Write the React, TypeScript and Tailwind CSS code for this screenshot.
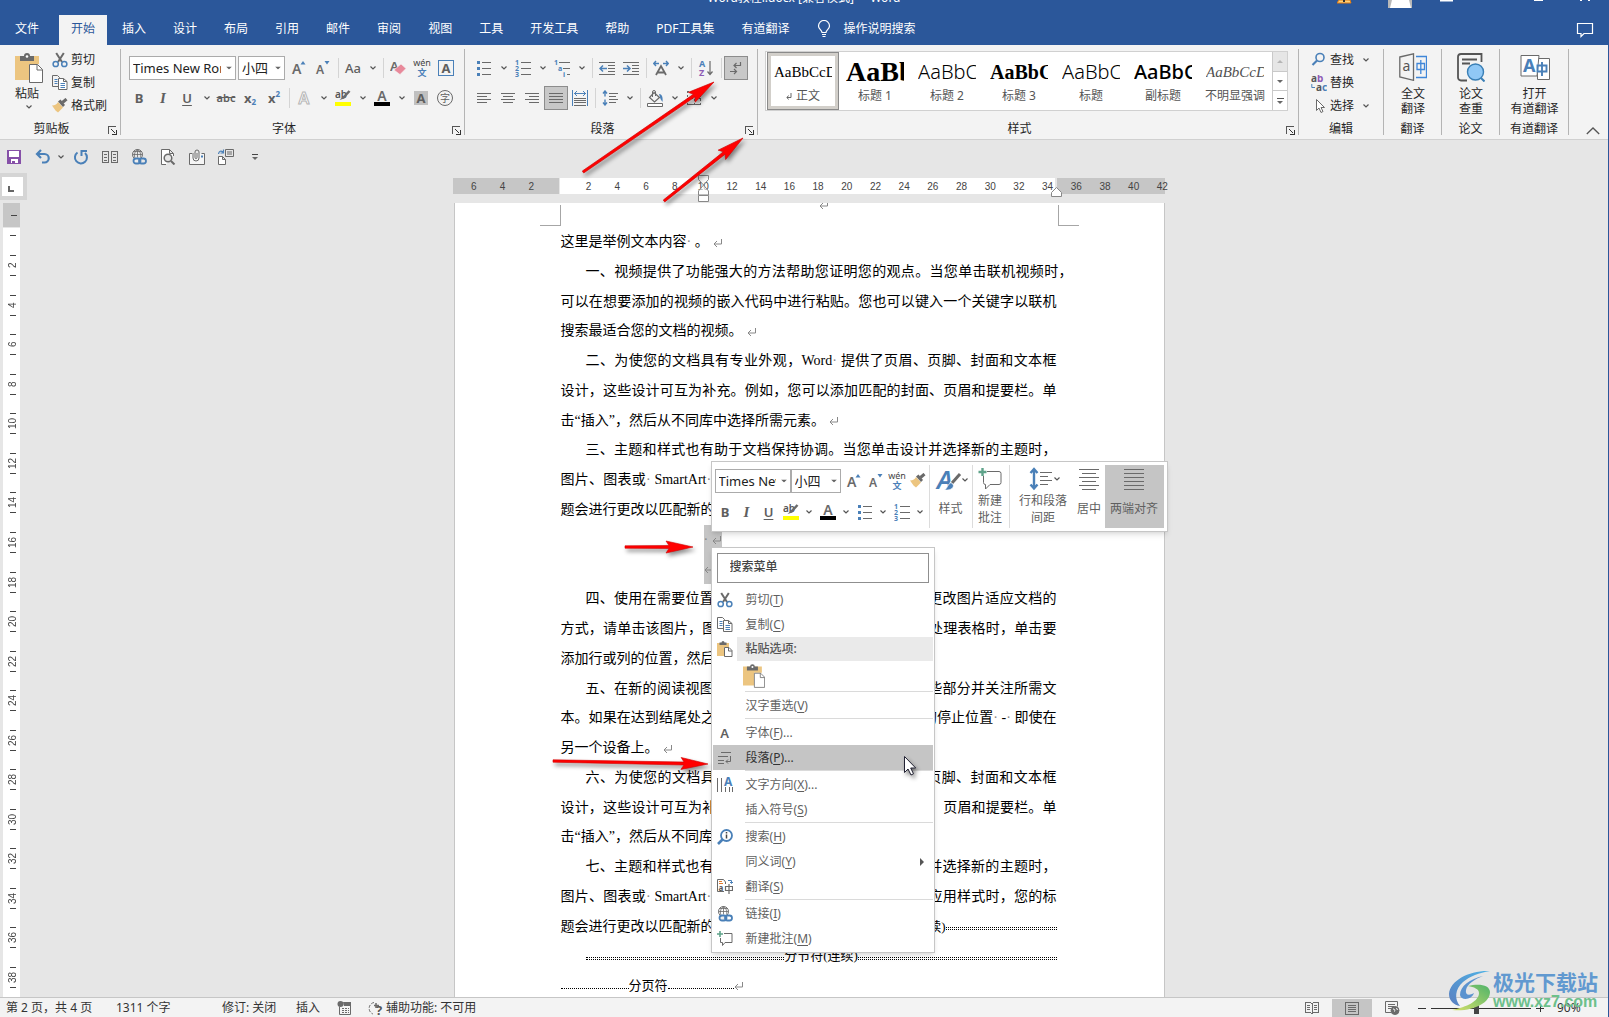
import * as React from "react";
import clsx from "clsx";

const GRAY = "#6a6a6a";
const BLUE = "#4a80b8";
const SAND = "#ecc580";

type IconProps = { w?: number; h?: number; crisp?: boolean; className?: string; children: React.ReactNode };

function Icon({ w = 16, h = 16, crisp, className, children }: IconProps) {
  return (
    <svg
      width={w}
      height={h}
      viewBox={`0 0 ${w} ${h}`}
      fill="none"
      stroke={GRAY}
      shapeRendering={crisp ? "crispEdges" : undefined}
      className={clsx("shrink-0", className)}
      aria-hidden="true"
    >
      {children}
    </svg>
  );
}

/* ---------- shared icons ---------- */

const Chevron = () => (
  <Icon w={6} h={4}>
    <path d="M.5 .5 3 3 5.5 .5" stroke="#555" strokeWidth="1.2" />
  </Icon>
);

const Caret = ({ className }: { className?: string }) => (
  <Icon w={6} h={3} className={className}>
    <path d="M0 0h6L3 3z" fill="#666" stroke="none" />
  </Icon>
);

const Scissors = () => (
  <Icon>
    <path d="M4.2 1 10 10M11.8 1 6 10" stroke="#6a6a6a" strokeWidth="2" />
    <circle cx="3.7" cy="12" r="2.6" stroke={BLUE} strokeWidth="1.5" />
    <circle cx="12.3" cy="12" r="2.6" stroke={BLUE} strokeWidth="1.5" />
  </Icon>
);

const Copy = () => (
  <Icon>
    <path d="M6 11.5H.5V.5h5l2 2V4" />
    <path d="M2.5 4.5h3M2.5 6.5h3M2.5 8.5h3" stroke={BLUE} />
    <path d="M6.5 3.5h5l3.5 3V14.5H6.5z" fill="#fff" />
    <path d="M11.5 3.5v3H15" />
    <path d="M8.500 8.500h4.500M8.500 10.500h4.500M8.500 12.500h4.500" stroke={BLUE} />
  </Icon>
);

const Brush = () => (
  <Icon>
    <path d="M6 4 11 9.500 6 14.500 3.500 12.500 0 7.500C3 7.500 5 6 6 4z" fill={SAND} stroke="none" />
    <path d="M6 3.500 8.500 1.500 13 7 11 9z" fill={GRAY} stroke="none" />
    <path d="M10.500 4.500 14.500 1" strokeWidth="3" />
  </Icon>
);

const PasteSmall = () => (
  <Icon>
    <path d="M0 2h12v4H7v9H0z" fill={SAND} stroke="none" />
    <path d="M2.500 1.500h2a1.500 1.500 0 0 1 3 0h2v2.500h-7z" fill={GRAY} stroke="none" />
    <path d="M7.500 6.500h4.500l3 3v6H7.500z" fill="#fff" />
    <path d="M11.500 6.500v3.500h3.500" />
  </Icon>
);

const PasteLarge = ({ w = 28, h = 30 }: { w?: number; h?: number }) => (
  <svg width={w} height={h} viewBox="0 0 28 30" fill="none" className="shrink-0" aria-hidden="true">
    <path d="M0 3h24v8H14v16H0z" fill={SAND} />
    <path d="M5 3h4a3 3 0 0 1 6 0h4v5H5z" fill={GRAY} />
    <circle cx="12" cy="3.500" r="1.300" fill="#fff" />
    <path d="M14.500 11.500h8l5 5v13h-13z" fill="#fff" stroke={GRAY} />
    <path d="M22 11.500v5.500h5.500" stroke={GRAY} />
  </svg>
);

const GrowFont = () => (
  <Icon>
    <text x="1" y="14" fontSize="14" fontWeight="600" fill={GRAY} stroke="none" fontFamily="Noto Sans">A</text>
    <path d="M9.500 4.500 12 1l2.500 3.500z" fill={BLUE} stroke="none" />
  </Icon>
);

const ShrinkFont = () => (
  <Icon>
    <text x="1" y="14" fontSize="12" fontWeight="600" fill={GRAY} stroke="none" fontFamily="Noto Sans">A</text>
    <path d="M9.500 1 12 4.500 14.500 1z" fill={BLUE} stroke="none" />
  </Icon>
);

const Pinyin = () => (
  <Icon w={18} h={18}>
    <text x="9" y="7" fontSize="9" textAnchor="middle" fill="#444" stroke="none" fontFamily="Noto Sans">wén</text>
    <text x="9" y="17" fontSize="9" fontWeight="700" textAnchor="middle" fill={BLUE} stroke="none" fontFamily="Noto Sans CJK SC">文</text>
  </Icon>
);

const Highlight = () => (
  <Icon w={16} h={18}>
    <text x="0" y="9" fontSize="10" fontWeight="600" fill="#555" stroke="none" fontFamily="Noto Sans">ab</text>
    <path d="M14.500 2 8 9" strokeWidth="2.500" />
    <path d="M8 7.500 9.500 9.500 4.500 11z" fill={GRAY} stroke="none" />
    <path d="M0 13h16v4H0z" fill="#ff0" stroke="none" />
  </Icon>
);

const FontColor = () => (
  <Icon w={16} h={18}>
    <text x="8" y="12" fontSize="14" fontWeight="600" textAnchor="middle" fill={GRAY} stroke="none" fontFamily="Noto Sans">A</text>
    <path d="M0 13h16v4H0z" fill="#000" stroke="none" />
  </Icon>
);

const Bullets = () => (
  <Icon crisp>
    <path d="M1 1h3v3H1zM1 7h3v3H1zM1 13h3v3H1z" fill={BLUE} stroke="none" />
    <path d="M6 2.500h9M6 8.500h9M6 14.500h9" />
  </Icon>
);

const Numbering = () => (
  <Icon h={18}>
    <g fontSize="7" fontWeight="700" fill={BLUE} stroke="none" fontFamily="Noto Sans">
      <text x="0" y="6">1</text>
      <text x="0" y="12">2</text>
      <text x="0" y="18">3</text>
    </g>
    <path d="M6 3.500h10M6 9.500h10M6 15.500h10" shapeRendering="crispEdges" />
  </Icon>
);

const Lines = ({ rows }: { rows: [number, number][] }) => (
  <Icon w={14} h={13} crisp>
    {rows.map(([x1, x2], i) => (
      <path key={i} d={`M${x1} ${i * 3 + 1.5}H${x2}`} />
    ))}
  </Icon>
);

const Return = ({ className = "ml-1" }: { className?: string }) => (
  <Icon w={9} h={8} className={clsx("inline-block", className)}>
    <path d="M8.500 0v5H1M4 2 1 5l3 3" stroke="#888" />
  </Icon>
);

const GlobeLink = () => (
  <Icon>
    <circle cx="6.500" cy="5.500" r="5" />
    <path d="M1.500 5.500h10M6.500 .5v8M6.500 .5C3 3 3 7 4 9M6.500 .5c3 2 3.500 5 3 8M2.500 2.500h8" strokeWidth=".8" />
    <rect x="2.500" y="9.500" width="7" height="5" rx="2.500" stroke={BLUE} strokeWidth="1.800" fill="#eee" />
    <rect x="8" y="9.500" width="7" height="5" rx="2.500" stroke={BLUE} strokeWidth="1.800" />
  </Icon>
);

const NewComment = () => (
  <Icon>
    <path d="M7 2.500h8v9H8L5.500 14.500v-3H3.500V7" />
    <path d="M3 0v6M0 3h6" stroke="#5fa38a" strokeWidth="1.600" />
  </Icon>
);

/* ---------- ribbon pieces ---------- */

function Tool({ label, active, className, children }: { label: string; active?: boolean; className?: string; children: React.ReactNode }) {
  return (
    <button
      type="button"
      aria-label={label}
      aria-pressed={active}
      className={clsx(
        "flex h-6 shrink-0 items-center justify-center text-[#5f5f5f]",
        active && "border border-[#8c8c8c] bg-[#c8c8c8]",
        className ?? "w-6"
      )}
    >
      {children}
    </button>
  );
}

const Drop = ({ label }: { label: string }) => (
  <button type="button" aria-label={label} className="flex h-6 w-[15px] shrink-0 items-center justify-center">
    <Chevron />
  </button>
);

const Sep = () => (
  <span className="flex h-5 w-[6px] shrink-0 justify-center">
    <span className="w-px bg-[#d4d4d4]" />
  </span>
);

function Combo({ label, value, className }: { label: string; value: string; className: string }) {
  return (
    <span className={clsx("relative shrink-0", className)}>
      <select
        aria-label={label}
        defaultValue={value}
        className="h-full w-full appearance-none overflow-hidden border border-[#ababab] bg-white pr-[14px] pl-[3px] text-[13px] leading-[20px] text-[#222]"
      >
        <option>{value}</option>
      </select>
      <Caret className="pointer-events-none absolute top-1/2 right-1 -translate-y-1/2" />
    </span>
  );
}

function Group({ label, launcher, className, children }: { label: string; launcher?: boolean; className: string; children: React.ReactNode }) {
  return (
    <section aria-label={label} className={clsx("flex", className)}>
      <div className="flex min-w-0 flex-1 flex-col">
        <div className="h-[74px]">{children}</div>
        <div className="flex h-5 items-center">
          <span className="flex-1 text-center whitespace-nowrap">{label}</span>
          {launcher && (
            <button type="button" aria-label={`${label} 设置`} className="mt-[2px] mr-[2px] ml-[5px] w-[10px]">
              <Icon w={9} h={9} crisp>
                <path d="M.5 8V.5H8" stroke="#555" />
                <path d="M3 3l4 4M8 4v4H4" stroke="#333" />
              </Icon>
            </button>
          )}
        </div>
      </div>
      <div className="my-1 w-px bg-[#b4b4b4]" />
    </section>
  );
}

const SmallCmd = ({ icon, text, drop }: { icon: React.ReactNode; text: string; drop?: boolean }) => (
  <button type="button" className="flex h-[23px] items-center gap-[3px] whitespace-nowrap">
    {icon}
    <span>{text}</span>
    {drop && (
      <span className="ml-[6px]">
        <Chevron />
      </span>
    )}
  </button>
);

const BigCmd = ({ icon, lines }: { icon: React.ReactNode; lines: string[] }) => (
  <button type="button" className="flex w-full flex-col items-center pt-2 pl-px leading-[15px]">
    <span className="mb-[5px] h-[28px]">{icon}</span>
    {lines.map((l) => (
      <span key={l} className="whitespace-nowrap">{l}</span>
    ))}
  </button>
);

const TABS = ["开始", "插入", "设计", "布局", "引用", "邮件", "审阅", "视图", "工具", "开发工具", "帮助", "PDF工具集", "有道翻译"];

function TitleAndTabs() {
  return (
    <header className="relative bg-[#2b579a] text-white">
      <div className="grid h-[15px] grid-cols-[1fr_auto_1fr] overflow-hidden">
        <span />
        <h1 className="-mt-[11px] text-[12px] leading-[18px] whitespace-pre">Word教程l.docx [兼容模式]  -  Word</h1>
        <div className="flex justify-end">
          <svg width="254" height="9" viewBox="0 0 254 9" aria-hidden="true" className="mr-[17px]">
            <path d="M2 0h11l1 3H0z" fill="#ffd27a" stroke="#e07b10" />
            <path d="M7 0v2" stroke="#333" strokeWidth="2" />
            <path d="M51 0h24v8H51z" fill="#b8b8b8" />
            <path d="M55 0h17l2 8H53z" fill="#fff" />
            <path d="M103 0h13v1.500h-13zM197 0h9v1h-9zM243 0h2v1h-2zM251 0h2v1h-2z" fill="#fff" />
          </svg>
        </div>
      </div>
      <nav className="flex h-[30px] items-stretch leading-[14px]">
        <button type="button" className="mr-2 ml-[3px] px-3 pb-[2px]">文件</button>
        <div role="tablist" className="flex gap-[3px]">
          {TABS.map((t, i) => (
            <button
              key={t}
              type="button"
              role="tab"
              aria-selected={i === 0}
              className={clsx("px-3 pb-[2px] whitespace-nowrap", i === 0 && "bg-[#f3f3f3] text-[#2b579a]")}
            >
              {t}
            </button>
          ))}
        </div>
        <button type="button" className="ml-3 flex items-center gap-3 px-1 pb-[2px] whitespace-nowrap">
          <Icon w={14} h={18}>
            <path d="M5 12.500C5 10 1.500 9 1.500 6a5.500 5.500 0 0 1 11 0c0 3-3.500 4-3.500 6.500zM5 14.500h4M5.500 16.500h3" stroke="#fff" strokeWidth="1.200" />
          </Icon>
          操作说明搜索
        </button>
        <button type="button" aria-label="批注" className="mr-[14px] ml-auto">
          <Icon w={18} h={16}>
            <path d="M1.500 1.500h15v10H8L5 14.500v-3H1.500z" stroke="#fff" strokeWidth="1.200" />
          </Icon>
        </button>
      </nav>
    </header>
  );
}

const STYLES = [
  { name: "正文", cls: "font-['Liberation_Serif'] text-[15px] text-black" },
  { name: "标题 1", cls: "font-['Liberation_Serif'] text-[28px] font-bold text-black" },
  { name: "标题 2", cls: "font-['Noto_Sans'] text-[20px] font-light text-black" },
  { name: "标题 3", cls: "font-['Liberation_Serif'] text-[20px] font-bold text-black" },
  { name: "标题", cls: "font-['Noto_Sans'] text-[20px] font-light text-black" },
  { name: "副标题", cls: "font-['Noto_Sans'] text-[20px] font-medium text-black" },
  { name: "不明显强调", cls: "font-['Liberation_Serif'] text-[15px] italic text-[#505050]" },
];

function StyleGallery() {
  return (
    <div className="mt-[6px] mr-[10px] ml-[7px] flex h-[60px] border border-[#d0d0d0] bg-white">
      <div className="flex min-w-0 flex-1 overflow-hidden pl-px">
        {STYLES.map((s, i) => (
          <button
            key={s.name}
            type="button"
            className={clsx(
              "flex w-[72px] shrink-0 flex-col items-center justify-center",
              i === 0 && "border border-[#8a8a8a] bg-white ring-[3px] ring-[#d2cfca] ring-inset"
            )}
          >
            <span className={clsx("mt-[2px] flex h-[28px] w-[58px] items-center overflow-hidden whitespace-nowrap", s.cls)}>
              AaBbCcDd
            </span>
            <span className="flex h-5 items-center gap-1 whitespace-nowrap text-[#555]">
              {i === 0 && (
                <Icon w={6} h={7}>
                  <path d="M5 0v4.500H1M2.500 2.500 1 4.500l1.500 2" stroke="#666" />
                </Icon>
              )}
              {s.name}
            </span>
          </button>
        ))}
      </div>
      <div className="flex w-[15px] flex-col border-l border-[#c9c9c9]">
        <button type="button" aria-label="上一行" className="flex flex-1 items-center justify-center bg-[#e6e6e6]">
          <Icon w={6} h={3}>
            <path d="M0 3h6L3 0z" fill="#b5b5b5" stroke="none" />
          </Icon>
        </button>
        <button type="button" aria-label="下一行" className="flex flex-1 items-center justify-center border-y border-[#c9c9c9]">
          <Caret />
        </button>
        <button type="button" aria-label="更多样式" className="flex flex-1 flex-col items-center justify-center gap-[2px]">
          <span className="h-px w-[7px] bg-[#555]" />
          <Caret />
        </button>
      </div>
    </div>
  );
}

function Ribbon() {
  return (
    <div className="flex h-[95px] shrink-0 border-b border-[#d0d0d0] bg-[#f3f3f3] text-[#262626]">
      <Group label="剪贴板" launcher className="w-[121px]">
        <div className="flex gap-[9px] pl-[15px]">
          <button type="button" className="flex w-7 flex-col items-start pt-2">
            <PasteLarge />
            <span className="mt-[2px] leading-[18px] whitespace-nowrap">粘贴</span>
            <span className="mt-[2px] ml-[11px]">
              <Chevron />
            </span>
          </button>
          <div className="pt-[3px]">
            <SmallCmd icon={<Scissors />} text="剪切" />
            <SmallCmd icon={<Copy />} text="复制" />
            <SmallCmd icon={<Brush />} text="格式刷" />
          </div>
        </div>
      </Group>

      <Group label="字体" launcher className="w-[344px]">
        <div className="mt-[11px] flex h-6 items-center pl-2">
          <Combo label="字体" value="Times New Roman" className="h-6 w-[107px]" />
          <Combo label="字号" value="小四" className="mx-[2px] h-6 w-[47px]" />
          <Tool label="增大字号"><GrowFont /></Tool>
          <Tool label="减小字号"><ShrinkFont /></Tool>
          <Sep />
          <Tool label="更改大小写" className="w-6 text-[13px] font-medium">Aa</Tool>
          <Drop label="更改大小写选项" />
          <Sep />
          <Tool label="清除所有格式">
            <Icon>
              <text x="0" y="11" fontSize="13" fontWeight="600" fill={GRAY} stroke="none" fontFamily="Noto Sans">A</text>
              <path d="m11 4 5 4.500-6 6-6-4.500z" fill="#e8899a" stroke="#f3f3f3" strokeWidth=".6" />
            </Icon>
          </Tool>
          <Tool label="拼音指南"><Pinyin /></Tool>
          <Tool label="字符边框">
            <span className="flex h-4 w-4 items-center justify-center border border-[#4a80b8] text-[13px] font-bold">A</span>
          </Tool>
        </div>
        <div className="mt-[6px] flex h-6 items-center pl-[6px]">
          <Tool label="加粗" className="w-6 text-[13px] font-bold">B</Tool>
          <Tool label="倾斜" className="w-6 font-['Liberation_Serif'] text-[15px] font-bold italic">I</Tool>
          <Tool label="下划线" className="w-6 text-[13px] font-semibold underline underline-offset-2">U</Tool>
          <Drop label="下划线选项" />
          <Tool label="删除线" className="w-6 text-[11px] font-semibold line-through">abc</Tool>
          <Tool label="下标" className="w-6 text-[13px] font-bold">
            x<span className="mt-2 text-[8px] text-[#4a80b8]">2</span>
          </Tool>
          <Tool label="上标" className="w-6 text-[13px] font-bold">
            x<span className="-mt-2 text-[8px] text-[#4a80b8]">2</span>
          </Tool>
          <Sep />
          <Tool label="文本效果">
            <Icon>
              <text x="8" y="14" fontSize="16" textAnchor="middle" fill="#fff" stroke="#b5b5b5" fontFamily="Noto Sans" fontWeight="600">A</text>
            </Icon>
          </Tool>
          <Drop label="文本效果选项" />
          <Tool label="突出显示"><Highlight /></Tool>
          <Drop label="突出显示颜色" />
          <Tool label="字体颜色"><FontColor /></Tool>
          <Drop label="更多字体颜色" />
          <Tool label="字符底纹">
            <span className="flex h-[14px] w-[14px] items-center justify-center bg-[#c0c0c0] text-[13px] font-bold">A</span>
          </Tool>
          <Tool label="带圈字符">
            <span className="flex h-4 w-4 items-center justify-center rounded-full border border-[#6a6a6a] text-[10px]">字</span>
          </Tool>
        </div>
      </Group>

      <Group label="段落" launcher className="w-[293px]">
        <div className="mt-[11px] flex h-6 items-center pl-[7px]">
          <Tool label="项目符号"><Bullets /></Tool>
          <Drop label="项目符号库" />
          <Tool label="编号"><Numbering /></Tool>
          <Drop label="编号库" />
          <Tool label="多级列表">
            <Icon h={18}>
              <g fontSize="7" fontWeight="700" fill={BLUE} stroke="none" fontFamily="Noto Sans">
                <text x="0" y="6">1</text>
                <text x="4" y="12">a</text>
                <text x="9" y="18">i</text>
              </g>
              <path d="M5 3.500h11M9 9.500h7M13 15.500h3" shapeRendering="crispEdges" />
            </Icon>
          </Tool>
          <Drop label="多级列表库" />
          <Sep />
          <Tool label="减少缩进量">
            <Icon h={13}>
              <path d="M0 .5h16M9 3.500h7M9 6.500h7M9 9.500h7M0 12.500h16" />
              <path d="M8 6.500H1M4 3.500 1 6.500l3 3" stroke={BLUE} strokeWidth="1.500" />
            </Icon>
          </Tool>
          <Tool label="增加缩进量">
            <Icon h={13}>
              <path d="M0 .5h16M9 3.500h7M9 6.500h7M9 9.500h7M0 12.500h16" />
              <path d="M0 6.500h7M4 3.500l3 3-3 3" stroke={BLUE} strokeWidth="1.500" />
            </Icon>
          </Tool>
          <Sep />
          <Tool label="中文版式">
            <Icon>
              <path d="M3 15 8 6l5 9M4.500 12.500h7" strokeWidth="1.800" />
              <path d="M6 3.500H1M3 1 .8 3.500 3 6M10 3.500h5M13 1l2.200 2.500L13 6" stroke={BLUE} strokeWidth="1.400" />
            </Icon>
          </Tool>
          <Drop label="中文版式选项" />
          <Sep />
          <Tool label="排序">
            <Icon>
              <text x="1" y="7" fontSize="9" fontWeight="700" fill={BLUE} stroke="none" fontFamily="Noto Sans">A</text>
              <text x="1" y="16" fontSize="9" fontWeight="700" fill="#8d5bb5" stroke="none" fontFamily="Noto Sans">Z</text>
              <path d="M12 1v13M9.500 11.500 12 14.500l2.500-3" strokeWidth="1.200" />
            </Icon>
          </Tool>
          <Sep />
          <Tool label="显示编辑标记" active>
            <Icon>
              <path d="M12.500 2v3.500H6.500M8.500 3 6 5.500 8.500 8M2 11.500h6M6 9l2.500 2.500L6 14" strokeWidth="1.200" />
            </Icon>
          </Tool>
        </div>
        <div className="mt-[6px] flex h-6 items-center pl-[7px]">
          <Tool label="左对齐"><Lines rows={[[0, 14], [0, 10], [0, 14], [0, 10]]} /></Tool>
          <Tool label="居中"><Lines rows={[[0, 14], [2, 12], [0, 14], [2, 12]]} /></Tool>
          <Tool label="右对齐"><Lines rows={[[0, 14], [4, 14], [0, 14], [4, 14]]} /></Tool>
          <Tool label="两端对齐" active><Lines rows={[[0, 14], [0, 14], [0, 14], [0, 14]]} /></Tool>
          <Tool label="分散对齐">
            <Icon crisp>
              <path d="M.5 0v16M15.500 0v16" stroke={BLUE} />
              <path d="M2 3.500h12M5 1 2.500 3.500 5 6M11 1l2.500 2.500L11 6" stroke={BLUE} />
              <path d="M2 8.500h12M2 10.500h12M2 12.500h12M2 15.500h12" />
            </Icon>
          </Tool>
          <Sep />
          <Tool label="行和段落间距">
            <Icon>
              <path d="M7 3.500h9M7 6.500h7M7 9.500h9M7 12.500h7" />
              <path d="M3 1v5.500M1 3.500 3 1l2 2.500M3 15V9.500M1 12.500 3 15l2-2.500" stroke={BLUE} strokeWidth="1.400" />
            </Icon>
          </Tool>
          <Drop label="行距选项" />
          <Sep />
          <Tool label="底纹">
            <Icon h={17}>
              <path d="M7 2.500 12.500 7.500 7.500 12 2.500 7.500z" strokeWidth="1.200" />
              <path d="M5.500 7V2a1.500 1.500 0 0 1 3 0v4" />
              <path d="M12 4c3 0 4 3 3.500 8l-2-3z" fill={BLUE} stroke="none" />
              <path d="M.5 13.500h15v3H.5z" fill="#fff" />
            </Icon>
          </Tool>
          <Drop label="底纹颜色" />
          <Tool label="边框">
            <Icon w={14} h={14} crisp>
              <path d="M.5 0v13M13.500 0v13M0 .5h14M7 0v13M0 7h14" strokeDasharray="2 2" />
              <path d="M0 13.500h14" strokeWidth="2" />
            </Icon>
          </Tool>
          <Drop label="边框选项" />
        </div>
      </Group>

      <Group label="样式" launcher className="min-w-0 flex-1">
        <StyleGallery />
      </Group>

      <Group label="编辑" className="w-[85px]">
        <div className="pt-[3px] pl-3">
          <SmallCmd
            icon={
              <Icon>
                <circle cx="9" cy="5.500" r="4" stroke={BLUE} strokeWidth="1.600" />
                <path d="M6 8.500 1.500 13" stroke={BLUE} strokeWidth="2.200" />
              </Icon>
            }
            text="查找"
            drop
          />
          <SmallCmd
            icon={
              <Icon>
                <g fontSize="10" fontWeight="700" stroke="none" fontFamily="Noto Sans">
                  <text x="0" y="7" fill="#555">a</text>
                  <text x="6" y="7" fill="#8d5bb5">b</text>
                  <text x="5" y="16" fill="#555">a</text>
                  <text x="11" y="16" fill={BLUE}>c</text>
                </g>
                <path d="M.8 9v3.500H4" stroke={BLUE} />
              </Icon>
            }
            text="替换"
          />
          <SmallCmd
            icon={
              <Icon>
                <path d="M5.500 1.500v11l2.500-2.500 2 4.500 2-1-2-4h3.500z" fill="#fff" />
              </Icon>
            }
            text="选择"
            drop
          />
        </div>
      </Group>

      <Group label="翻译" className="w-[58px]">
        <BigCmd
          lines={["全文", "翻译"]}
          icon={
            <Icon w={28} h={28}>
              <path d="M.8 4 14.500 .8v26.500L.8 24z" strokeWidth="1.300" />
              <path d="M17 3.500h10.500v21H17" stroke="#3f86d8" strokeWidth="1.300" />
              <text x="3.500" y="18" fontSize="14" fill="#555" stroke="none" fontFamily="Noto Sans">a</text>
              <path d="M18 10.500h7.500v6H18zM21.800 7v14" stroke="#3f86d8" strokeWidth="1.300" />
            </Icon>
          }
        />
      </Group>

      <Group label="论文" className="w-[58px]">
        <BigCmd
          lines={["论文", "查重"]}
          icon={
            <Icon w={28} h={29}>
              <path d="M10 27.500H4A3 3 0 0 1 1 24.500V4a3 3 0 0 1 3-3h20.500v8" strokeWidth="1.800" stroke="#555" />
              <path d="M5 6.500h15M5 10.500h8" strokeWidth="2" stroke="#555" />
              <circle cx="18.500" cy="19" r="8" fill="#90c8f6" stroke="#3a7fb5" strokeWidth="1.400" />
              <path d="m24 25 3.500 3.500" stroke="#3a7fb5" strokeWidth="2" />
            </Icon>
          }
        />
      </Group>

      <Group label="有道翻译" className="w-[69px]">
        <BigCmd
          lines={["打开", "有道翻译"]}
          icon={
            <Icon w={30} h={28}>
              <path d="M17.500 5.500h12v21h-12z" fill="#fff" />
              <path d="M1 2.500h18l-2 20.500H1z" fill="#fff" />
              <text x="3" y="19" fontSize="18" fontWeight="700" fill={BLUE} stroke="none" fontFamily="Noto Sans">A</text>
              <path d="M17.500 12.500h9v6h-9zM22 9v14" stroke={BLUE} strokeWidth="1.900" />
            </Icon>
          }
        />
      </Group>

      <div className="flex w-[39px] items-end justify-end">
        <button type="button" aria-label="折叠功能区" className="mr-2 mb-1">
          <Icon w={14} h={8}>
            <path d="M.8 7 7 1l6.200 6" stroke="#555" strokeWidth="1.300" />
          </Icon>
        </button>
      </div>
    </div>
  );
}

function QuickAccess() {
  const btn = "flex w-[29px] shrink-0 items-center justify-center pr-px";
  return (
    <div className="flex h-[33px] shrink-0 items-center" role="toolbar" aria-label="快速访问工具栏">
      <button type="button" aria-label="保存" className={btn}>
        <Icon w={14} h={14} crisp>
          <path d="M0 0h14v14H0z" fill="#8650a8" stroke="none" />
          <path d="M2 1h10v6H2zM4 9h7v4H4z" fill="#fff" stroke="none" />
          <path d="M5 11h3v2H5z" fill="#8650a8" stroke="none" />
        </Icon>
      </button>
      <button type="button" aria-label="撤消" className={btn}>
        <Icon>
          <path d="M2 5h7.500a4.200 4.200 0 0 1 0 8.500H7M6 1 2 5l4 4" stroke={BLUE} strokeWidth="2.200" />
        </Icon>
      </button>
      <button type="button" aria-label="撤消列表" className="flex w-[9px] items-center">
        <Chevron />
      </button>
      <button type="button" aria-label="恢复" className={btn}>
        <Icon>
          <path d="M4.500 3.500A6 6 0 1 0 12 4M8.500 7V2H14" stroke={BLUE} strokeWidth="2" />
        </Icon>
      </button>
      <button type="button" aria-label="并排查看" className={btn}>
        <Icon crisp>
          <path d="M.5 2.500h6v11h-6zM9.500 2.500h6v11h-6zM2 5.500h3M2 8.500h3M2 11.500h3M11 5.500h3M11 8.500h3M11 11.500h3" />
        </Icon>
      </button>
      <button type="button" aria-label="链接" className={btn}>
        <GlobeLink />
      </button>
      <button type="button" aria-label="打印预览" className={btn}>
        <Icon>
          <path d="M6 15.500H1.500V.5h8l4 4V7M9.500 .5v4h4" fill="#fff" />
          <circle cx="8" cy="9" r="3.800" fill="#e6e6e6" strokeWidth="1.500" />
          <path d="m11 12 3.500 3.500" strokeWidth="2" />
        </Icon>
      </button>
      <button type="button" aria-label="附件" className={btn}>
        <Icon>
          <path d="M3 4.500H.5v11h15v-11h-3" fill="#f5f5f5" />
          <path d="M12 6.500h2v2h-2z" fill={BLUE} stroke="none" />
          <path d="M4 4v5a3 3 0 0 0 6 0V3a2 2 0 0 0-4 0v5.500a1 1 0 0 0 2 0V4" />
        </Icon>
      </button>
      <button type="button" aria-label="导出" className={btn}>
        <Icon>
          <path d="M7.500 .5h8v7h-8zM9 3h5M9 5h5" />
          <path d="M.5 7.500h4l3 3v5h-7zM4.500 7.500v3h3" fill="#fff" />
          <path d="M.5 5C1 2 3 1.500 5 3M5.500 .5V4H2.500" stroke={BLUE} strokeWidth="1.200" />
        </Icon>
      </button>
      <button type="button" aria-label="自定义快速访问工具栏" className={clsx(btn, "flex-col gap-[2px]")}>
        <span className="h-px w-[6px] bg-[#444]" />
        <Caret />
      </button>
    </div>
  );
}

/* ---------- rulers ---------- */

const H_MARKS = Array.from({ length: 25 }, (_, i) => (i - 3) * 2);
const V_MARKS = Array.from({ length: 19 }, (_, i) => (i + 1) * 2);

function HorizontalRuler() {
  return (
    <div className="relative mt-[5px] flex h-4 w-full text-[#444]">
      <span className="w-[106px] bg-[#c6c6c6]" />
      <span className="ml-px flex-1 bg-white" />
      <span className="ml-[2px] w-[108px] bg-[#c6c6c6]" />
      <div className="absolute inset-y-0 left-[7px] flex w-[717px] font-['Liberation_Sans'] text-[10px] leading-[18px]">
        {H_MARKS.map((n) => (
          <span key={n} className="flex-1 text-center">{n === 0 ? "" : Math.abs(n)}</span>
        ))}
      </div>
      <Icon w={11} h={28} className="absolute -top-[3px] left-[245px]">
        <path d="M.5 .5h10v4l-5 5.500-5-5.500z" fill="#f3f3f3" fillOpacity=".5" stroke="#888" />
        <path d="M.5 20v-4l5-6 5 6v4z" fill="#fff" fillOpacity=".6" stroke="#888" />
        <path d="M.5 20.500h10v6H.5z" fill="#fff" stroke="#888" />
      </Icon>
      <Icon w={11} h={10} className="absolute top-[9px] left-[598px]">
        <path d="M.5 9.500v-4l5-5 5 5v4z" fill="#fff" stroke="#888" />
      </Icon>
    </div>
  );
}

const Tick = () => <span className="h-px w-[6px] shrink-0 bg-[#444]" />;

function VerticalRuler() {
  return (
    <div className="flex w-[27px] shrink-0 flex-col">
      <button type="button" aria-label="制表符" className="h-[27px] w-[27px] border-4 border-l-2 border-[#d5d5d5] bg-white">
        <span className="mt-1 ml-[6px] block h-[6px] w-[6px] border-b-2 border-l-2 border-[#666]" />
      </button>
      <div className="mt-[3px] ml-[3px] flex h-6 w-[17px] items-center justify-center bg-[#c6c6c6] pl-1">
        <Tick />
      </div>
      <div className="mt-px ml-[3px] flex min-h-0 w-[17px] flex-1 flex-col items-center bg-white pl-[3px] font-['Liberation_Sans'] text-[10px] text-[#444]">
        <span className="flex h-[18px] shrink-0 items-center pb-1">
          <Tick />
        </span>
        {V_MARKS.map((n) => (
          <span key={n} className="flex min-h-0 flex-1 flex-col items-center justify-center">
            <Tick />
            <span className="flex h-[19px] rotate-180 items-center justify-center leading-none [writing-mode:vertical-rl]">{n}</span>
            <Tick />
          </span>
        ))}
      </div>
    </div>
  );
}

/* ---------- document ---------- */

// visible space mark, followed by the space itself
const Dot = () => <span className="text-[#888]">· </span>;

type Line = { text: React.ReactNode; indent?: boolean; end?: boolean; hang?: boolean };

const LINES: Line[] = [
  { text: <>这里是举例文本内容<Dot />。</>, end: true },
  { text: "一、视频提供了功能强大的方法帮助您证明您的观点。当您单击联机视频时，", indent: true, hang: true },
  { text: "可以在想要添加的视频的嵌入代码中进行粘贴。您也可以键入一个关键字以联机" },
  { text: "搜索最适合您的文档的视频。", end: true },
  { text: <>二、为使您的文档具有专业外观，Word<Dot />提供了页眉、页脚、封面和文本框</>, indent: true },
  { text: "设计，这些设计可互为补充。例如，您可以添加匹配的封面、页眉和提要栏。单" },
  { text: "击“插入”，然后从不同库中选择所需元素。", end: true },
  { text: "三、主题和样式也有助于文档保持协调。当您单击设计并选择新的主题时，", indent: true },
  { text: <>图片、图表或<Dot />SmartArt<Dot />图形将会更改以匹配新的主题。当应用样式时，您的标</> },
  { text: "题会进行更改以匹配新的主题。", end: true },
];

const LINES_AFTER: Line[] = [
  { text: "四、使用在需要位置出现的新按钮即可保存时间。若要更改图片适应文档的", indent: true },
  { text: "方式，请单击该图片，图片旁边将会显示布局选项按钮。当处理表格时，单击要" },
  { text: "添加行或列的位置，然后单击加号。", end: true },
  { text: "五、在新的阅读视图中阅读更加容易。可以折叠文档某些部分并关注所需文", indent: true },
  { text: <>本。如果在达到结尾处之前需要停止读取，Word<Dot />会记住您的停止位置<Dot />-<Dot />即使在</> },
  { text: "另一个设备上。", end: true },
  { text: <>六、为使您的文档具有专业外观，Word<Dot />提供了页眉、页脚、封面和文本框</>, indent: true },
  { text: "设计，这些设计可互为补充。例如，您可以添加匹配的封面、页眉和提要栏。单" },
  { text: "击“插入”，然后从不同库中选择所需元素。", end: true },
  { text: "七、主题和样式也有助于文档保持协调。当您单击设计并选择新的主题时，", indent: true },
  { text: <>图片、图表或<Dot />SmartArt<Dot />图形将会更改以匹配新的主题。当应用样式时，您的标</> },
];

const DocLine = ({ text, indent, end, hang }: Line) => (
  <p
    className={clsx(
      "whitespace-nowrap",
      indent && "pl-[25px]",
      hang && "-mr-4",
      !end && "[text-align-last:justify]"
    )}
  >
    {text}
    {end && <Return />}
  </p>
);

const BreakDots = ({ className }: { className?: string }) => (
  <span className={clsx("mt-1 h-[3px] border-y border-dotted border-black", className)} />
);

function Page() {
  return (
    <article className="relative mt-[9px] ml-px min-h-0 flex-1 overflow-hidden border-x border-[#c6c6c6] bg-white">
      <span className="absolute top-[2px] left-[85px] h-[21px] w-[21px] border-r border-b border-[#a6a6a6]" />
      <span className="absolute top-[2px] right-[85px] h-[21px] w-[21px] border-b border-l border-[#a6a6a6]" />
      <div className="absolute -top-[2px] left-[360px] flex">
        <Return />
      </div>
      <div className="mt-6 mr-[107px] ml-[106px] grid h-[774px] grid-rows-[repeat(26,minmax(0,1fr))] font-['Liberation_Serif','Noto_Sans_CJK_SC',serif] text-[14px] leading-[30px] text-black">
        {LINES.map((l, i) => (
          <DocLine key={i} {...l} />
        ))}
        <p className="ml-[143px] flex w-[18px] items-center bg-[#c5c5c5]">
          <span className="w-1 text-[#888]">·</span>
          <Return />
        </p>
        <p className="ml-[143px] flex w-3 items-center bg-[#c5c5c5]">
          <Return className="ml-0" />
        </p>
        {LINES_AFTER.map((l, i) => (
          <DocLine key={i} {...l} />
        ))}
        <p className="flex items-center whitespace-nowrap">
          题会进行更改以匹配新的主题。
          <BreakDots className="flex-1" />
          <span className="text-[13px]">分节符(连续)</span>
          <BreakDots className="w-[111px]" />
        </p>
        <p className="flex items-center pl-[25px] text-[13px] whitespace-nowrap">
          <BreakDots className="flex-1" />
          分节符(连续)
          <BreakDots className="flex-1" />
        </p>
        <p className="flex items-center text-[13px] whitespace-nowrap">
          <span className="mt-1 w-[68px] border-t border-dotted border-black" />
          分页符
          <span className="mt-1 w-[66px] border-t border-dotted border-black" />
          <Return className="ml-0" />
        </p>
      </div>
    </article>
  );
}

/* ---------- floating toolbar and context menu ---------- */

function MiniToolbar() {
  const big = "flex shrink-0 flex-col items-center leading-[17px]";
  return (
    <div
      role="toolbar"
      aria-label="浮动工具栏"
      className="absolute top-[288px] left-[258px] flex h-[71px] w-[457px] border border-[#c6c6c6] bg-white p-[3px] text-[#5f5f5f] shadow-md"
    >
      <div className="w-[214px] shrink-0">
        <div className="mt-[4px] flex h-6 items-center">
          <Combo label="字体" value="Times New Roman" className="h-6 w-[76px]" />
          <Combo label="字号" value="小四" className="h-6 w-[50px]" />
          <span className="w-[2px]" />
          <Tool label="增大字号" className="w-[22px]"><GrowFont /></Tool>
          <Tool label="减小字号" className="w-[22px]"><ShrinkFont /></Tool>
          <Tool label="拼音指南" className="w-[20px]"><Pinyin /></Tool>
          <Tool label="格式刷" className="w-[22px]"><Brush /></Tool>
        </div>
        <div className="mt-[7px] flex h-6 items-center">
          <Tool label="加粗" className="w-[21px] text-[13px] font-bold">B</Tool>
          <Tool label="倾斜" className="w-[22px] font-['Liberation_Serif'] text-[15px] font-bold italic">I</Tool>
          <Tool label="下划线" className="w-[22px] text-[13px] font-semibold underline underline-offset-2">U</Tool>
          <Tool label="突出显示" className="w-[22px]"><Highlight /></Tool>
          <Drop label="突出显示颜色" />
          <Tool label="字体颜色" className="w-[22px]"><FontColor /></Tool>
          <Drop label="更多字体颜色" />
          <Tool label="项目符号" className="w-[22px]"><Bullets /></Tool>
          <Drop label="项目符号库" />
          <Tool label="编号" className="w-[22px]"><Numbering /></Tool>
          <Drop label="编号库" />
        </div>
      </div>
      <div className="w-px bg-[#dcdcdc]" />
      <button type="button" className={clsx(big, "w-[42px] pt-[3px]")}>
        <Icon w={34} h={24}>
          <text x="3" y="21" fontSize="26" fontWeight="600" fontStyle="italic" fill={BLUE} stroke="none" fontFamily="Noto Sans">A</text>
          <path d="M26 6 17 16" strokeWidth="4" stroke="#fff" />
          <path d="M26 6 18 15" strokeWidth="3" />
          <path d="M17 14.500 19.500 17c0 4-4 5.500-9 5 3-1.500 3-6 6.500-7.500z" fill={BLUE} stroke="#fff" strokeWidth=".7" />
          <path d="M28.500 10.500 31 13l2.500-2.500" stroke="#555" strokeWidth="1.200" />
        </Icon>
        <span className="mt-2">样式</span>
      </button>
      <div className="w-px bg-[#dcdcdc]" />
      <button type="button" className={clsx(big, "w-[35px] pt-[2px]")}>
        <Icon w={24} h={24}>
          <path d="M9 4.500h12a2 2 0 0 1 2 2v9a2 2 0 0 1-2 2h-9L7.500 22v-4.500H7a2 2 0 0 1-1.500-2V9" />
          <path d="M4.500 1v8M.5 5h8" stroke="#5fa38a" strokeWidth="2.400" />
        </Icon>
        <span className="mt-px">新建<br />批注</span>
      </button>
      <div className="mx-px w-px bg-[#dcdcdc]" />
      <button type="button" className={clsx(big, "w-[63px] pt-[2px] pl-[2px]")}>
        <Icon w={34} h={24}>
          <path d="M14 5.500h12M14 9.500h8M14 13.500h12M14 17.500h8" />
          <path d="M8 2v19M4.500 6 8 2l3.500 4M4.500 17.500 8 21.500l3.500-4" stroke={BLUE} strokeWidth="2.400" />
          <path d="M28.500 10.500 31 13l2.500-2.500" stroke="#555" strokeWidth="1.200" />
        </Icon>
        <span className="mt-px whitespace-nowrap">行和段落<br />间距</span>
      </button>
      <button type="button" className={clsx(big, "w-[31px] pt-1")}>
        <Icon w={20} h={22} crisp>
          <path d="M0 .5h20M3 4.500h14M0 8.500h20M3 12.500h14M0 16.500h20M3 20.500h14" />
        </Icon>
        <span className="mt-[9px]">居中</span>
      </button>
      <button type="button" aria-pressed="true" className={clsx(big, "min-w-0 flex-1 bg-[#c5c5c5] pt-1")}>
        <Icon w={20} h={22} crisp>
          <path d="M0 .5h20M0 4.500h20M0 8.500h20M0 12.500h20M0 16.500h20M0 20.500h20" />
        </Icon>
        <span className="mt-[9px] whitespace-nowrap">两端对齐</span>
      </button>
    </div>
  );
}

function MenuItem({ icon, text, accel, more, active, sub }: { icon?: React.ReactNode; text: string; accel: string; more?: boolean; active?: boolean; sub?: boolean }) {
  return (
    <button
      type="button"
      role="menuitem"
      className={clsx("flex h-[25px] w-full items-center pl-1", active ? "bg-[#c5c5c5] text-[#333]" : "text-[#5f5f5f]")}
    >
      <span className="flex w-[29px] items-center">{icon}</span>
      <span>
        {text}(<u className="underline-offset-2">{accel}</u>){more && "..."}
      </span>
      {sub && (
        <Icon w={4} h={8} className="mr-[9px] ml-auto">
          <path d="M0 0v8l4-4z" fill="#555" stroke="none" />
        </Icon>
      )}
    </button>
  );
}

const MenuSep = () => <div role="separator" className="ml-8 h-[2px] border-t border-[#dadada]" />;

function ContextMenu() {
  return (
    <div role="menu" className="absolute top-[374px] left-[258px] w-[224px] border border-[#c6c6c6] bg-white px-px pb-px shadow-md">
      <input
        type="text"
        aria-label="搜索菜单"
        placeholder="搜索菜单"
        className="mx-[4px] mt-[5px] mb-1 block h-[30px] w-[212px] border border-[#8f8f8f] bg-white pb-[3px] pl-3 text-[12px] placeholder:font-medium placeholder:text-[#444]"
      />
      <MenuItem icon={<Scissors />} text="剪切" accel="T" />
      <MenuItem icon={<Copy />} text="复制" accel="C" />
      <div className="flex h-6 items-center pl-1">
        <span className="w-5"><PasteSmall /></span>
        <span className="flex h-full flex-1 items-center bg-[#eaeaea] pl-[9px] font-medium text-[#555]">粘贴选项:</span>
      </div>
      <button type="button" aria-label="保留源格式" className="flex h-[30px] items-center pl-[30px]">
        <PasteLarge w={22} h={24} />
      </button>
      <MenuSep />
      <MenuItem text="汉字重选" accel="V" />
      <MenuSep />
      <MenuItem icon={<span className="w-4 text-center text-[13px] font-semibold">A</span>} text="字体" accel="F" more />
      <MenuItem
        icon={
          <Icon w={15} h={14}>
            <path d="M4 1.500h10M1 5.500h10M1 9.500h6M1 12.500h6M13.500 5v5.500H9M11 8.500 9 10.500l2 2" />
          </Icon>
        }
        text="段落"
        accel="P"
        more
        active
      />
      <MenuSep />
      <MenuItem
        icon={
          <Icon>
            <path d="M.5 1v14M4.500 1v14M8.500 10v5M12.500 10v5M15.500 10v5" />
            <text x="7" y="9" fontSize="12" fontWeight="700" fill={BLUE} stroke="none" fontFamily="Noto Sans">A</text>
          </Icon>
        }
        text="文字方向"
        accel="X"
        more
      />
      <MenuItem text="插入符号" accel="S" />
      <MenuSep />
      <MenuItem
        icon={
          <Icon>
            <circle cx="9.500" cy="6.500" r="5.500" stroke={BLUE} strokeWidth="1.800" />
            <path d="M5.500 10.500 1 15" stroke={BLUE} strokeWidth="2.600" />
            <path d="M9.500 5.500v4M9.500 3v1.500" stroke="#444" strokeWidth="1.500" />
          </Icon>
        }
        text="搜索"
        accel="H"
      />
      <MenuItem text="同义词" accel="Y" sub />
      <MenuItem
        icon={
          <Icon>
            <path d="M7 12.500H.5V.5h6l2 2.500v2" />
            <path d="M2 2.500h3M2 4.500h4" stroke="#e07b30" />
            <text x="1.500" y="11.500" fontSize="8" fontWeight="700" fill="#555" stroke="none" fontFamily="Noto Sans">a</text>
            <path d="M8.500 7.500h7v4h-7zM12 5v10" strokeWidth="1.200" />
            <path d="M11 1.500h3.500V4M13 3l1.500 1.500L16 3" stroke={BLUE} />
          </Icon>
        }
        text="翻译"
        accel="S"
      />
      <MenuSep />
      <MenuItem icon={<GlobeLink />} text="链接" accel="I" />
      <MenuItem icon={<NewComment />} text="新建批注" accel="M" />
    </div>
  );
}

function StatusBar() {
  return (
    <footer className="flex h-5 shrink-0 items-center border-t border-[#c6c6c6] bg-[#f3f3f3] pt-px pl-[6px] whitespace-nowrap text-[#333]">
      <span className="w-[110px]">第 2 页，共 4 页</span>
      <span className="w-[106px]">1311 个字</span>
      <span className="w-[74px]">修订: 关闭</span>
      <span className="w-[41px]">插入</span>
      <span className="w-[31px]">
        <Icon w={14} h={14}>
          <path d="M2.500 5.500v8h11v-10" />
          <path d="M5 7.500h7M5 9.500h7M5 11.500h7" strokeDasharray="2 1" />
          <path d="M6 1h8v4H7z" fill={GRAY} stroke="none" />
          <circle cx="3.500" cy="3" r="3" fill={GRAY} stroke="none" />
        </Icon>
      </span>
      <Icon w={17} h={15}>
        <path d="M6 1.500A6 6 0 0 0 5 13" strokeDasharray="3 1.500" />
        <path d="M6 4.500h5M8 2v5" strokeWidth="1.500" />
        <text x="8" y="14" fontSize="13" fontWeight="700" fill="#555" stroke="none" fontFamily="Noto Sans">?</text>
      </Icon>
      <span className="ml-px">辅助功能: 不可用</span>
      <div className="ml-auto flex h-full items-center">
        <button type="button" aria-label="阅读视图" className="flex w-[27px] justify-start">
          <Icon w={14} h={13} crisp>
            <path d="M.5 .5h5L7 2l1.500-1.500h5v10h-5L7 12l-1.500-1.500h-5zM7 2v10M2 3.500h3M2 5.500h3M2 7.500h3M9 3.500h3M9 5.500h3M9 7.500h3" />
          </Icon>
        </button>
        <button type="button" aria-label="页面视图" aria-pressed="true" className="flex h-full w-10 items-center justify-center bg-[#c5c5c5]">
          <Icon w={14} h={13} crisp>
            <path d="M.5 .5h13v12H.5zM3 3.500h8M3 5.500h8M3 7.500h8M3 9.500h8" />
          </Icon>
        </button>
        <button type="button" aria-label="Web 版式视图" className="flex w-[46px] justify-start pl-[13px]">
          <Icon w={15} h={14}>
            <path d="M6 11.500H.5V.5h12v5M3 3.500h7M3 5.500h6M3 7.500h3" />
            <circle cx="10" cy="9.500" r="4" fill={GRAY} />
            <path d="M8 8c2 0 2 1 1.500 2.500M11.500 7l1 2" stroke="#fff" />
          </Icon>
        </button>
        <button type="button" aria-label="缩小" className="flex w-[13px] justify-start">
          <span className="h-px w-2 bg-[#333]" />
        </button>
        <input
          type="range"
          aria-label="显示比例"
          min={0}
          max={100}
          defaultValue={45}
          className="h-[11px] w-[100px] appearance-none bg-[linear-gradient(#333,#333)] bg-[length:100%_1px] bg-center bg-no-repeat [&::-webkit-slider-thumb]:h-[11px] [&::-webkit-slider-thumb]:w-[5px] [&::-webkit-slider-thumb]:appearance-none [&::-webkit-slider-thumb]:bg-[#444]"
        />
        <button type="button" aria-label="放大" className="ml-[5px] flex w-[21px] justify-start">
          <Icon w={8} h={8} crisp>
            <path d="M4.500 0v8M0 4.500h8" stroke="#333" />
          </Icon>
        </button>
        <span className="w-[51px]">90%</span>
      </div>
    </footer>
  );
}

/* ---------- annotations ---------- */

function Arrow({ x1, y1, x2, y2 }: { x1: number; y1: number; x2: number; y2: number }) {
  const len = Math.hypot(x2 - x1, y2 - y1);
  const angle = (Math.atan2(y2 - y1, x2 - x1) * 180) / Math.PI;
  return (
    <g transform={`translate(${x1} ${y1}) rotate(${angle})`}>
      <path
        d={`M0 -1.200 L${len - 24} -1.500 L${len - 27} -6 L${len} 0 L${len - 27} 6 L${len - 24} 1.500 L0 1.200 z`}
        fill="#ff0000"
        stroke="#d00000"
        strokeWidth=".6"
      />
    </g>
  );
}

function Annotations() {
  return (
    <svg className="pointer-events-none absolute inset-0 h-full w-full drop-shadow-[2px_3px_2px_rgba(0,0,0,0.45)]" aria-hidden="true">
      <Arrow x1={583} y1={172} x2={714} y2={82} />
      <Arrow x1={664} y1={201} x2={743} y2={138} />
      <Arrow x1={625} y1={547} x2={693} y2={547} />
      <Arrow x1={553} y1={761} x2={708} y2={764} />
      <path d="M904.500 756.500v16l3.500-3.500 3 6 2.500-1.200-2.800-5.800h5z" fill="#fff" stroke="#223" />
    </svg>
  );
}

function Watermark() {
  return (
    <div className="pointer-events-none absolute right-[10px] bottom-[5px] flex items-start gap-[2px]">
      <svg width="43" height="42" viewBox="0 0 43 42" aria-hidden="true">
        <defs>
          <linearGradient id="swirl-blue" x1="0" y1="1" x2="1" y2="0">
            <stop offset="0" stopColor="#5a7fc0" />
            <stop offset="1" stopColor="#4fb3e6" />
          </linearGradient>
          <linearGradient id="swirl-green" x1="0" y1="1" x2="1" y2="0">
            <stop offset="0" stopColor="#d6e06a" />
            <stop offset="1" stopColor="#4fb36a" />
          </linearGradient>
        </defs>
        <path d="M42 1C22 0 2 10 1 24c0 7 5 11 11 12-6-7-5-17 3-24C22 6 31 3 42 1z" fill="url(#swirl-blue)" />
        <path d="M35 6C22 9 12 16 12 25c1 6 12 5 14-2-5 3-9 2-8-3 1-6 9-11 17-14z" fill="#5b93cf" />
        <path d="M20 16c11-3 22-1 22 6 0 11-17 20-38 18 15-3 27-9 27-17 0-4-5-6-11-7z" fill="url(#swirl-green)" />
      </svg>
      <div className="whitespace-nowrap">
        <div className="font-['Noto_Sans_CJK_SC',sans-serif] text-[21px] leading-[22px] font-bold text-[#6199d0]">极光下载站</div>
        <div className="font-['Liberation_Sans',sans-serif] text-[16px] leading-[20px] font-bold text-[#6cc08b]">www.xz7.com</div>
      </div>
    </div>
  );
}

export default function App() {
  return (
    <div className="relative flex h-screen flex-col overflow-hidden border-r border-[#2b579a] bg-[#e6e6e6] font-['Noto_Sans','Noto_Sans_CJK_SC',sans-serif] text-[12px] leading-4">
      <TitleAndTabs />
      <Ribbon />
      <QuickAccess />
      <main className="flex min-h-0 flex-1">
        <VerticalRuler />
        <div className="flex min-w-0 flex-1 justify-center pr-[18px]">
          <div className="relative flex w-[712px] flex-col">
            <HorizontalRuler />
            <Page />
            <MiniToolbar />
            <ContextMenu />
          </div>
        </div>
      </main>
      <StatusBar />
      <Watermark />
      <Annotations />
    </div>
  );
}
